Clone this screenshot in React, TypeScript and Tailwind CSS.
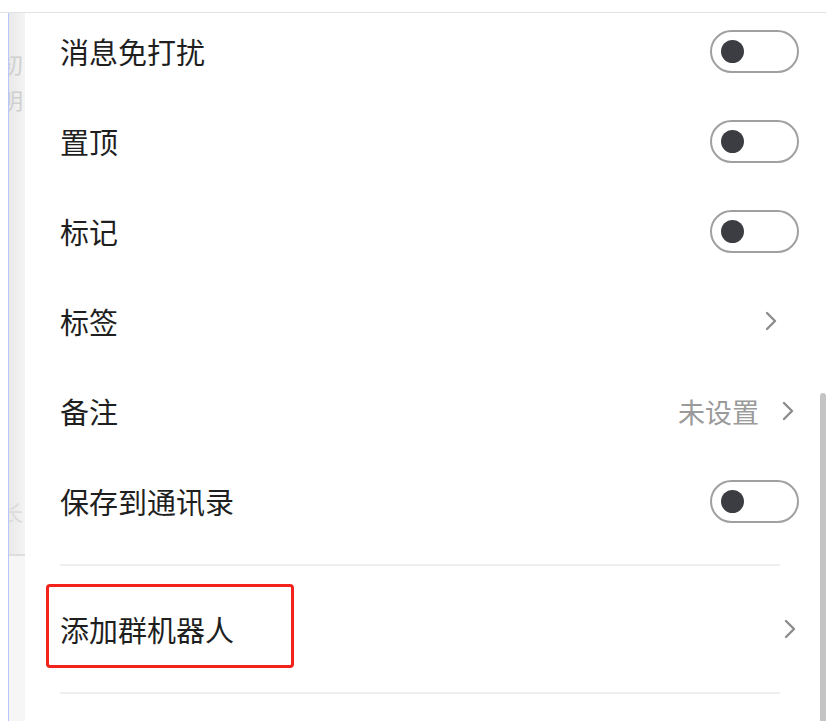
import React from "react";

const font = { fontFamily: '"Noto Sans CJK SC", "Noto Sans", sans-serif' };

function Toggle() {
  return (
    <div className="w-[89px] h-[43px] rounded-full border-2 border-[#a0a0a0] flex items-center pl-[9px] shrink-0">
      <div className="w-[23px] h-[23px] rounded-full bg-[#3b3d42]" />
    </div>
  );
}

function Chevron() {
  return (
    <svg width="14" height="22" viewBox="0 0 14 22" fill="none" className="shrink-0">
      <path d="M3 3 L11 11 L3 19" stroke="#8c8c8c" strokeWidth="2.4" strokeLinecap="round" strokeLinejoin="round" />
    </svg>
  );
}

function Row({ label, right, pr }: { label: string; right: React.ReactNode; pr: string }) {
  return (
    <div className={`h-[90px] flex items-center justify-between ${pr}`}>
      <span className="text-[29px] text-[#1f1f1f] leading-none">{label}</span>
      {right}
    </div>
  );
}

export default function App() {
  return (
    <div className="relative w-[826px] h-[721px] overflow-hidden bg-white" style={font}>
      <div className="h-[13px] border-b border-[#e2e2e2] bg-white" />
      <div className="flex h-[708px]">
        <div className="w-[8px] bg-white shrink-0" />
        <div className="w-[1px] bg-[#b9c5fb] shrink-0" />
        <div className="w-[16px] shrink-0 overflow-hidden bg-gradient-to-r from-[#e9e9e9] to-[#f4f4f4] flex flex-col">
          <div className="h-[541px] overflow-hidden relative">
            <div className="-ml-[8px] pt-[32px] text-[22px] leading-[36px] text-[#cfcfcf]">
              <div>初</div>
              <div>明</div>
            </div>
            <div className="-ml-[8px] mt-[378px] text-[22px] text-[#dcdcdc]">长</div>
          </div>
          <div className="h-[2px] bg-[#dedede]" />
          <div className="flex-1 bg-[#f6f6f6]" />
        </div>
        <div className="flex-1 overflow-hidden">
          <div className="-mt-[7px] pl-[35px]">
            <Row label="消息免打扰" right={<Toggle />} pr="pr-[27px]" />
            <Row label="置顶" right={<Toggle />} pr="pr-[27px]" />
            <Row label="标记" right={<Toggle />} pr="pr-[27px]" />
            <Row label="标签" right={<Chevron />} pr="pr-[48px]" />
            <Row
              label="备注"
              right={
                <div className="flex items-center gap-[22px]">
                  <span className="text-[27px] text-[#9a9a9a] leading-none">未设置</span>
                  <Chevron />
                </div>
              }
              pr="pr-[31px]"
            />
            <Row label="保存到通讯录" right={<Toggle />} pr="pr-[27px]" />
            <div className="mt-[18px] mr-[46px] h-[2px] bg-[#eeeeee]" />
            <div className="h-[126px] flex items-center justify-between pr-[29px]">
              <span className="text-[29px] text-[#1f1f1f] leading-none">添加群机器人</span>
              <Chevron />
            </div>
            <div className="mr-[46px] h-[2px] bg-[#eeeeee]" />
          </div>
        </div>
      </div>
      <div className="absolute left-[46px] top-[584px] w-[248px] h-[84px] border-[3px] border-[#f4221a] rounded-[4px]" />
      <div className="absolute left-[820px] top-[393px] w-[6px] h-[328px] bg-[#c4c4c4] rounded-t-[3px]" />
    </div>
  );
}
